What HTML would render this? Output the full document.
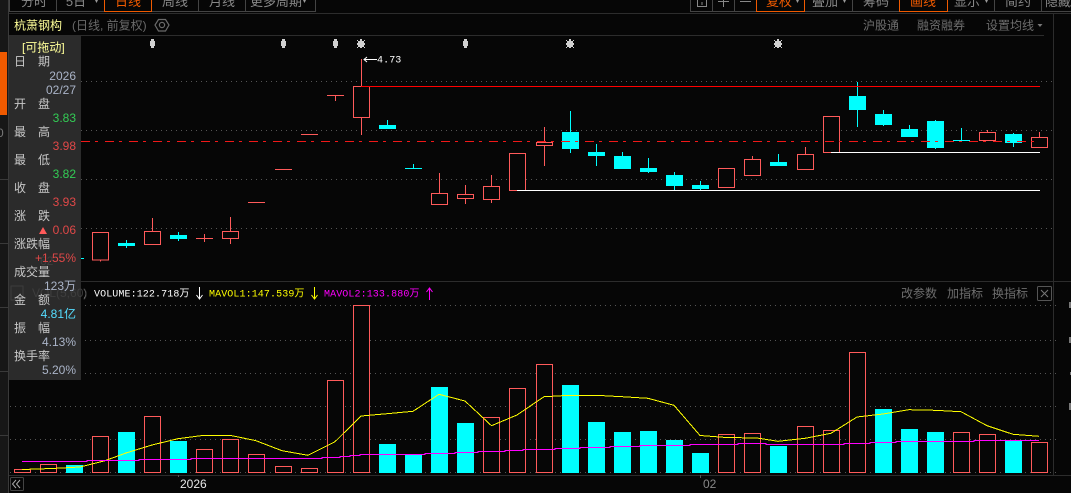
<!DOCTYPE html>
<html><head><meta charset="utf-8">
<style>
html,body{margin:0;padding:0;background:#060606;width:1071px;height:493px;overflow:hidden}
svg{display:block;position:absolute;left:0;top:0}
text{font-family:"Liberation Sans","WenQuanYi Zen Hei","Noto Sans CJK SC",sans-serif;font-size:12px}
.m{font-family:"Liberation Mono","WenQuanYi Zen Hei",monospace;font-size:10px;letter-spacing:.1px}
.l{fill:#c8c8c8}
.v{text-anchor:end}
.tb{font-size:13px;fill:#888;text-anchor:middle}
.g{fill:#6e6e6e}
.h{fill:#060606;stroke:#ff5a5a;stroke-width:1}
.r{stroke:#ff5a5a;stroke-width:1}
.c{stroke:#00ffff;stroke-width:1}
.f{fill:#00ffff}
</style></head><body>
<svg width="1071" height="493" viewBox="0 0 1071 493" xmlns="http://www.w3.org/2000/svg">
<rect width="1071" height="493" fill="#060606"/>
<!-- left strip -->
<rect x="0" y="0" width="8" height="493" fill="#171717"/>
<rect x="0" y="52" width="7" height="63" fill="#f05a00"/>
<g shape-rendering="crispEdges" stroke="#3a3a3a">
<path d="M8.5 0V493M0 179.5H8M0 243.5H8M0 307.5H8M0 371.5H8M0 435.5H8"/>
</g>
<text x="-3" y="137" fill="#777" font-size="10">0</text>
<!-- frame lines -->
<g shape-rendering="crispEdges" stroke="#2c2c2c">
<path d="M9 13.5H1071M9 35.5H1044M9 281.5H1071M9 475.5H1071M1053.5 14V475"/>
</g>
<!-- toolbar -->
<g shape-rendering="crispEdges" fill="none" stroke="#444">
<path d="M9.5 0V11.5H315.5V0M56.5 0V11M104.5 0V11M151.5 0V11M198.5 0V11M245.5 0V11"/>
<path d="M690.5 0V11.5H1071M712.5 0V11M734.5 0V11M756.5 0V11M804.5 0V11M852.5 0V11M899.5 0V11M947.5 0V11M994.5 0V11M1041.5 0V11"/>
</g>
<g shape-rendering="crispEdges" fill="none" stroke="#f05a00">
<path d="M104.5 0V11.5H151.5V0"/>
<path d="M756.5 0V11.5H804.5V0"/>
<path d="M899.5 0V11.5H947.5V0"/>
</g>
<text class="tb" x="34" y="6">分时</text>
<text class="tb" x="76" y="6">5日</text>
<text class="tb" x="128" y="6" style="fill:#f05a00">日线</text>
<text class="tb" x="175" y="6">周线</text>
<text class="tb" x="222" y="6">月线</text>
<text class="tb" x="276" y="6">更多周期</text>
<text class="tb" x="779" y="6" style="fill:#f05a00">复权</text>
<text class="tb" x="825" y="6">叠加</text>
<text class="tb" x="876" y="6">筹码</text>
<text class="tb" x="923" y="6" style="fill:#f05a00">画线</text>
<text class="tb" x="967" y="6">显示</text>
<text class="tb" x="1018" y="6">简约</text>
<text class="tb" x="1058" y="6">隐藏</text>
<g fill="#999">
<path d="M95 0h3l-1.5 3zM303 0h3l-1.5 3zM796 0h3l-1.5 3zM843 0h3l-1.5 3zM985 0h3l-1.5 3z"/>
</g>
<g fill="none" stroke="#888" shape-rendering="crispEdges">
<path d="M697.5 0V6.5H706.5V0M702 2V5"/>
<path d="M718 1.5H729M723.5 0V7"/>
<path d="M740 1.5H751"/>
</g>
<!-- header -->
<text x="14" y="29.5" fill="#ffff99">杭萧钢构</text>
<text x="72" y="29.5" fill="#6a6a6a">(日线, 前复权)</text>
<g fill="none" stroke="#6a6a6a" stroke-width="1.2">
<path d="M158.5 19.5h7l3.5 5.5-3.5 6h-7l-3.5-6z"/>
<circle cx="162" cy="25" r="2.6"/>
</g>
<text x="863" y="29.5" class="g">沪股通</text>
<text x="917" y="29.5" class="g">融资融券</text>
<text x="986" y="29.5" class="g">设置均线</text>
<path d="M1037.5 24h5l-2.5 3z" fill="#777"/>
<!-- dotted grid -->
<g stroke="#555" stroke-width="1" stroke-dasharray="1 4" shape-rendering="crispEdges">
<path d="M81 81.5H1056M81 130.5H1056M81 179.5H1056M81 228.5H1056"/>
<path d="M10 305.5H1056M10 340.5H1056M10 373.5H1056M10 406.5H1056M10 439.5H1056M10 472.5H1056"/>
</g>
<!-- marks -->
<g fill="#d0d0d0" shape-rendering="crispEdges">
<rect x="150" y="41" width="5" height="5"/><rect x="151" y="39" width="3" height="9"/>
<rect x="281" y="41" width="5" height="5"/><rect x="282" y="39" width="3" height="9"/>
<rect x="333" y="41" width="5" height="5"/><rect x="334" y="39" width="3" height="9"/>
<rect x="463" y="41" width="5" height="5"/><rect x="464" y="39" width="3" height="9"/>
<path d="M358 41h6v6h-6zM357 43h8v2h-8zM360 39h2v9h-2zM357 40h1v1h-1zM364 40h1v1h-1zM357 47h1v1h-1zM364 47h1v1h-1z"/>
<path d="M567 41h6v6h-6zM566 43h8v2h-8zM569 39h2v9h-2zM566 40h1v1h-1zM573 40h1v1h-1zM566 47h1v1h-1zM573 47h1v1h-1z"/>
<path d="M775 41h6v6h-6zM774 43h8v2h-8zM777 39h2v9h-2zM774 40h1v1h-1zM781 40h1v1h-1zM774 47h1v1h-1zM781 47h1v1h-1z"/>
</g>
<!-- candles -->
<g shape-rendering="crispEdges">
<g class="r">
<path d="M100.5 260V261.5M152.5 218V231M204.5 234V242M196 238.5H213M230.5 217V231M230.5 238V244"/>
<path d="M248 202.5H265M275 169.5H292M301 134.5H318M327 95.5H344M335.5 95V101M361.5 59V87M361.5 117V135"/>
<path d="M439.5 173V193M465.5 185V194M465.5 199V204M491.5 175V186M491.5 200V203M544.5 127V142M544.5 145V166"/>
<path d="M752.5 156V159M805.5 147V154M987.5 130V132M1039.5 132V137"/>
</g>
<g class="h">
<rect x="92.5" y="232.5" width="16" height="27.5"/>
<rect x="144.5" y="231.5" width="16" height="13"/>
<rect x="222.5" y="231.5" width="16" height="7"/>
<rect x="353.5" y="86.5" width="16" height="31"/>
<rect x="431.5" y="193.5" width="16" height="11"/>
<rect x="457.5" y="194.5" width="16" height="4"/>
<rect x="483.5" y="186.5" width="16" height="13"/>
<rect x="509.5" y="153.5" width="16" height="37"/>
<rect x="536.5" y="142.5" width="16" height="3"/>
<rect x="718.5" y="168.5" width="16" height="19"/>
<rect x="744.5" y="159.5" width="16" height="16"/>
<rect x="797.5" y="154.5" width="16" height="15"/>
<rect x="823.5" y="116.5" width="16" height="36"/>
<rect x="979.5" y="132.5" width="16" height="8"/>
<rect x="1031.5" y="137.5" width="16" height="10"/>
</g>
<g class="c">
<path d="M126.5 240V248M178.5 232V241M387.5 120V125M413.5 164V168M570.5 111V153M596.5 144V166M622.5 152V156M648.5 158V173M674.5 172V190M700.5 181V190M778.5 154V162M857.5 82V127M883.5 110V126M909.5 125V129M935.5 120V149M961.5 128V141M1013.5 133V147"/>
<path d="M405 168.5H422M953 140.5H970"/>
</g>
<g class="f">
<rect x="118" y="243" width="17" height="3"/>
<rect x="170" y="235" width="17" height="4"/>
<rect x="379" y="125" width="17" height="4"/>
<rect x="562" y="132" width="17" height="17"/>
<rect x="588" y="152" width="17" height="4"/>
<rect x="614" y="156" width="17" height="13"/>
<rect x="640" y="168" width="17" height="4"/>
<rect x="666" y="175" width="17" height="11"/>
<rect x="692" y="185" width="17" height="4"/>
<rect x="770" y="162" width="17" height="4"/>
<rect x="849" y="96" width="17" height="14"/>
<rect x="875" y="114" width="17" height="11"/>
<rect x="901" y="129" width="17" height="8"/>
<rect x="927" y="121" width="17" height="27"/>
<rect x="1005" y="134" width="17" height="9"/>
</g>
<!-- horizontal lines -->
<path d="M361 86.5H1040" stroke="#ff0000"/>
<path d="M517 190.5H1040M831 152.5H1040" stroke="#ffffff"/>
<path d="M81 141.5H1040" stroke="#f01818" stroke-dasharray="9 5 3 7"/>
</g>
<!-- peak label -->
<path d="M377 59.5H364M367 57l-3 2.5 3 2.5" fill="none" stroke="#fff"/>
<text class="m" x="377" y="62.5" fill="#fff">4.73</text>
<!-- volume bars -->
<g shape-rendering="crispEdges">
<g class="h">
<rect x="14.5" y="469.5" width="16" height="3"/>
<rect x="40.5" y="464.5" width="16" height="8"/>
<rect x="92.5" y="436.5" width="16" height="36"/>
<rect x="144.5" y="416.5" width="16" height="56"/>
<rect x="196.5" y="449.5" width="16" height="23"/>
<rect x="222.5" y="439.5" width="16" height="33"/>
<rect x="248.5" y="454.5" width="16" height="18"/>
<rect x="275.5" y="466.5" width="16" height="6"/>
<rect x="301.5" y="468.5" width="16" height="4"/>
<rect x="327.5" y="380.5" width="16" height="92"/>
<rect x="353.5" y="305.5" width="16" height="167"/>
<rect x="483.5" y="417.5" width="16" height="55"/>
<rect x="509.5" y="388.5" width="16" height="84"/>
<rect x="536.5" y="364.5" width="16" height="108"/>
<rect x="718.5" y="434.5" width="16" height="38"/>
<rect x="744.5" y="433.5" width="16" height="39"/>
<rect x="797.5" y="426.5" width="16" height="46"/>
<rect x="823.5" y="430.5" width="16" height="42"/>
<rect x="849.5" y="352.5" width="16" height="120"/>
<rect x="953.5" y="432.5" width="16" height="40"/>
<rect x="979.5" y="434.5" width="16" height="38"/>
<rect x="1031.5" y="442.5" width="16" height="30"/>
</g>
<g class="f">
<rect x="66" y="465" width="17" height="8"/>
<rect x="118" y="432" width="17" height="41"/>
<rect x="170" y="441" width="17" height="32"/>
<rect x="379" y="444" width="17" height="29"/>
<rect x="405" y="455" width="17" height="18"/>
<rect x="431" y="387" width="17" height="86"/>
<rect x="457" y="423" width="17" height="50"/>
<rect x="562" y="385" width="17" height="88"/>
<rect x="588" y="422" width="17" height="51"/>
<rect x="614" y="432" width="17" height="41"/>
<rect x="640" y="431" width="17" height="42"/>
<rect x="666" y="440" width="17" height="33"/>
<rect x="692" y="453" width="17" height="20"/>
<rect x="770" y="446" width="17" height="27"/>
<rect x="875" y="409" width="17" height="64"/>
<rect x="901" y="429" width="17" height="44"/>
<rect x="927" y="432" width="17" height="41"/>
<rect x="1005" y="441" width="17" height="32"/>
</g>
</g>
<!-- MA lines -->
<polyline fill="none" stroke="#ffff00" stroke-width="1" shape-rendering="crispEdges" points="22,469.5 52,468.5 80,467 105,460.7 126,453 152,445 178,438.7 204,435.3 230,435.3 256,440.7 282,450.7 308,455.3 335,441.7 361,416 387,413.7 413,411.3 439,394.3 465,401 491.5,425.7 517,415 544,396.7 570,395.3 596,395.3 622,396.7 648,398.3 674,405.3 700,435.5 726,437.5 757,438 778,441.3 805,438.3 831,433.3 857,417 883,414 909,409.7 935,410.3 961,411.7 987,425.7 1013,434.3 1039,436.3"/>
<polyline fill="none" stroke="#ff00ff" stroke-width="1" shape-rendering="crispEdges" points="22,461.5 87,461.5 87,460.5 139,460.5 139,459.5 191,459.5 191,458.5 322,458.5 322,457.5 340,457.5 340,456.5 350,456.5 350,455.5 360,455.5 360,454.5 425,454.5 425,453.5 455,453.5 455,452.5 478,452.5 478,451.5 505,451.5 505,450.5 523,450.5 523,449.5 555,449.5 555,448.5 580,448.5 580,447.5 610,447.5 610,446.5 640,446.5 640,445.5 690,445.5 690,444.5 738,444.5 738,443.5 766,443.5 766,444.5 844,444.5 844,443.5 870,443.5 870,442.5 896,442.5 896,441.5 974,441.5 974,440.5 1039,440.5"/>
<!-- vol header -->
<text class="m" x="94" y="296.5" fill="#fff">VOLUME:122.718万</text>
<path d="M199.5 287V299M196.5 295l3 4 3-4" fill="none" stroke="#fff"/>
<text class="m" x="209" y="296.5" fill="#ffff00">MAVOL1:147.539万</text>
<path d="M314.5 287V299M311.5 295l3 4 3-4" fill="none" stroke="#ffff00"/>
<text class="m" x="324" y="296.5" fill="#ff00ff">MAVOL2:133.880万</text>
<path d="M429.5 300V288M426.5 292l3-4 3 4" fill="none" stroke="#ff00ff"/>
<text x="901" y="297.5" class="g">改参数</text>
<text x="947" y="297.5" class="g">加指标</text>
<text x="992" y="297.5" class="g">换指标</text>
<rect x="1037.5" y="286.5" width="14" height="14" rx="1" fill="none" stroke="#555"/>
<path d="M1041 290l7 7M1048 290l-7 7" stroke="#777" fill="none"/>
<!-- right axis fragments -->
<g fill="#777" shape-rendering="crispEdges">
<rect x="1069" y="302" width="2" height="6"/>
<rect x="1069" y="337" width="2" height="6"/>
<rect x="1070" y="372" width="1" height="3"/>
<rect x="1069" y="403" width="2" height="7"/>
</g>
<!-- bottom -->
<rect x="10.5" y="477.5" width="13" height="13" rx="1" fill="none" stroke="#444"/>
<path d="M16 480l-3.5 4 3.5 4M20 480l-3.5 4 3.5 4" fill="none" stroke="#aaa"/>
<path d="M178.5 475V477M700.5 475V478" stroke="#555" shape-rendering="crispEdges"/>
<text x="180" y="488" fill="#e8e8e8">2026</text>
<text x="703" y="488" fill="#888">02</text>
<!-- underlying -->
<rect x="81" y="258" width="3" height="1" fill="#00ffff"/>
<text class="m" x="82" y="296.5" fill="#bbb">)</text>
<!-- info panel -->
<rect x="9" y="36" width="72" height="344" fill="#2b2b2b"/>
<text x="40" y="265" fill="#3e3e3e" font-size="10">62</text>
<rect x="11" y="286" width="12" height="14" fill="none" stroke="#3c3c3c"/>
<text x="32" y="297" fill="#3e3e3e" font-size="10">VOL(5,60)</text>
<text x="22" y="51.5" fill="#ffff99">[可拖动]</text>
<text class="l" x="14" y="65.5">日</text><text class="l" x="38" y="65.5">期</text>
<text class="v" x="76" y="80" fill="#aab4c8">2026</text>
<text class="v" x="76" y="94" fill="#aab4c8">02/27</text>
<text class="l" x="14" y="108">开</text><text class="l" x="38" y="108">盘</text>
<text class="v" x="76" y="122" fill="#33cc55">3.83</text>
<text class="l" x="14" y="136">最</text><text class="l" x="38" y="136">高</text>
<text class="v" x="76" y="150" fill="#e04848">3.98</text>
<text class="l" x="14" y="164">最</text><text class="l" x="38" y="164">低</text>
<text class="v" x="76" y="178" fill="#33cc55">3.82</text>
<text class="l" x="14" y="192">收</text><text class="l" x="38" y="192">盘</text>
<text class="v" x="76" y="206" fill="#e04848">3.93</text>
<text class="l" x="14" y="220">涨</text><text class="l" x="38" y="220">跌</text>
<text class="v" x="76" y="234" fill="#e04848">0.06</text>
<path d="M39 234l4-7 4 7z" fill="#ff5a5a"/>
<text class="l" x="14" y="248">涨跌幅</text>
<text class="v" x="76" y="262" fill="#e04848">+1.55%</text>
<text class="l" x="14" y="276">成交量</text>
<text class="v" x="76" y="290" fill="#aab4c8">123万</text>
<text class="l" x="14" y="304">金</text><text class="l" x="38" y="304">额</text>
<text class="v" x="76" y="318" fill="#55ddff">4.81亿</text>
<text class="l" x="14" y="332">振</text><text class="l" x="38" y="332">幅</text>
<text class="v" x="76" y="346" fill="#aab4c8">4.13%</text>
<text class="l" x="14" y="360">换手率</text>
<text class="v" x="76" y="374" fill="#aab4c8">5.20%</text>
</svg>
</body></html>
